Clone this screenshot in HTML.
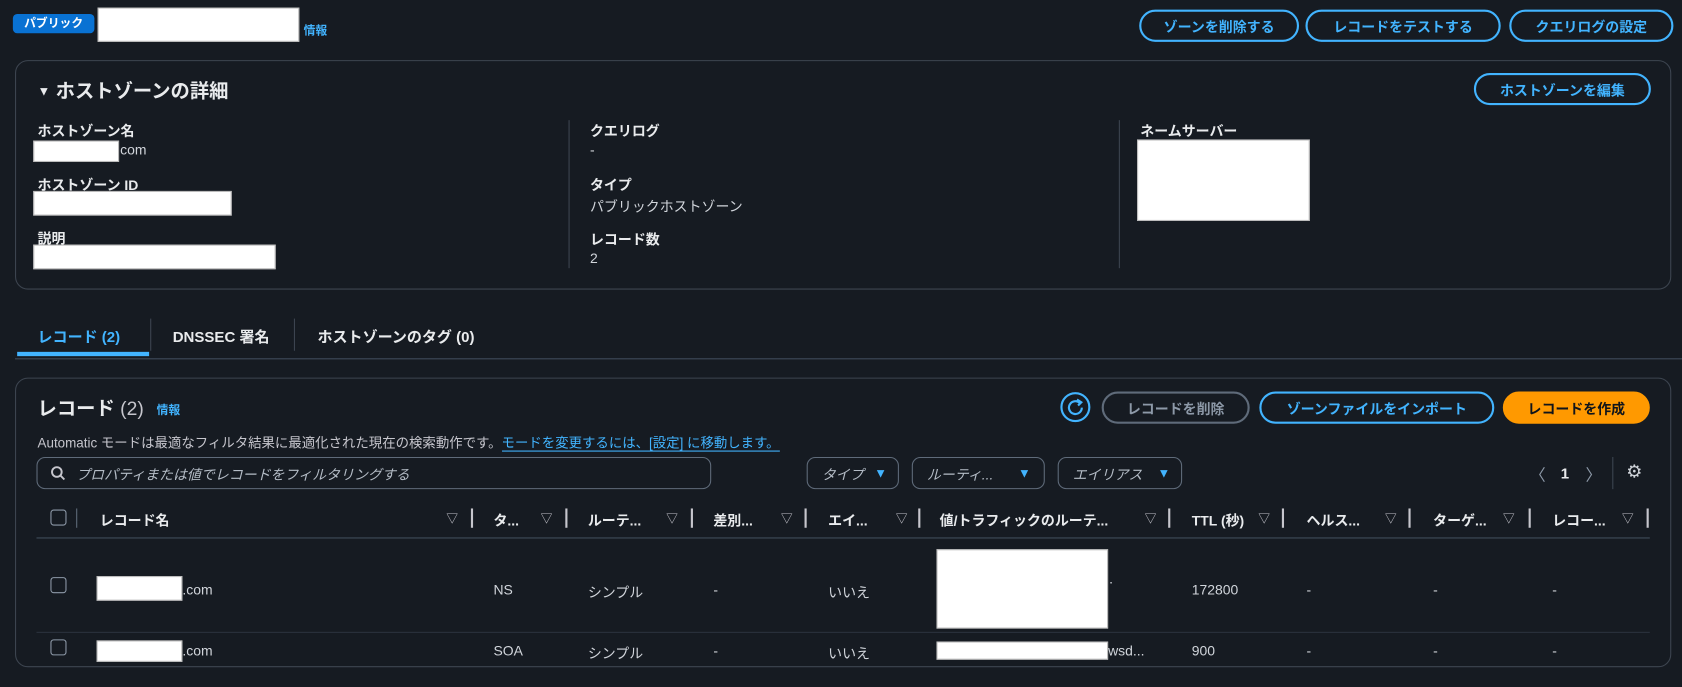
<!DOCTYPE html>
<html><head><meta charset="utf-8"><style>
html,body{margin:0;padding:0;width:1682px;height:687px;overflow:hidden;background:#161b22;}
#s{position:absolute;left:0;top:0;width:1568px;height:640px;transform:scale(1.0727);transform-origin:0 0;font-family:"Liberation Sans","Noto Sans CJK JP",sans-serif;color:#e9ebed;font-size:13px;}
.a{position:absolute;white-space:nowrap;}
.w{position:absolute;background:#fff;border:1px solid #bbb;box-sizing:border-box;}
.btn{position:absolute;box-sizing:border-box;border:2px solid #42b4ff;border-radius:16px;color:#42b4ff;font-weight:bold;font-size:13px;display:flex;align-items:center;justify-content:center;}
.card{position:absolute;border:1px solid #3d4550;border-radius:12px;box-sizing:border-box;}
.lb{font-weight:bold;font-size:13px;color:#e9ebed;}
.v{font-size:13px;color:#d1d5db;}
.vl{position:absolute;width:1px;background:#3d4550;}
.dd{position:absolute;box-sizing:border-box;border:1px solid #5f6b7a;border-radius:8px;height:30px;top:426px;color:#b4bcc6;font-style:italic;font-size:13px;display:flex;align-items:center;padding-left:13px;}
.tri{color:#42b4ff;font-style:normal;font-size:12px;position:absolute;}
.h{position:absolute;top:475px;font-weight:bold;font-size:13px;color:#e9ebed;white-space:nowrap;}
.hs{position:absolute;top:474px;width:2px;height:18px;background:#c6c6cd;}
.ht{position:absolute;top:475px;font-size:11px;color:#c6c6cd;}
.cb{position:absolute;width:13px;height:13px;border:1px solid #8d99a8;border-radius:3px;}
.c{position:absolute;font-size:13px;color:#d1d5db;white-space:nowrap;}
</style></head><body><div id="s">
<div class="a" style="left:12px;top:13px;width:76px;height:18px;background:#0972d3;border-radius:4px;color:#fff;font-size:11px;font-weight:bold;text-align:center;line-height:18px;">パブリック</div>
<div class="w" style="left:91px;top:7px;width:188px;height:32px;"></div>
<div class="a" style="left:283px;top:20px;color:#42b4ff;font-size:11px;font-weight:bold;">情報</div>
<div class="btn" style="left:1062px;top:9px;width:149px;height:30px;">ゾーンを削除する</div>
<div class="btn" style="left:1217px;top:9px;width:182px;height:30px;">レコードをテストする</div>
<div class="btn" style="left:1407px;top:9px;width:153px;height:30px;">クエリログの設定</div>

<div class="card" style="left:14px;top:56px;width:1544px;height:214px;"></div>
<div class="a" style="left:35px;top:71px;font-size:18px;font-weight:bold;"><span style="font-size:12px;position:relative;top:-2px;">▼</span> ホストゾーンの詳細</div>
<div class="btn" style="left:1374px;top:68px;width:165px;height:30px;">ホストゾーンを編集</div>
<div class="a lb" style="left:35px;top:112px;">ホストゾーン名</div>
<div class="w" style="left:31px;top:131px;width:80px;height:20px;"></div>
<div class="a v" style="left:112px;top:132px;">com</div>
<div class="a lb" style="left:35px;top:162px;">ホストゾーン ID</div>
<div class="w" style="left:31px;top:178px;width:185px;height:23px;"></div>
<div class="a lb" style="left:35px;top:212px;">説明</div>
<div class="w" style="left:31px;top:228px;width:226px;height:23px;"></div>
<div class="vl" style="left:530px;top:112px;height:138px;"></div>
<div class="a lb" style="left:550px;top:112px;">クエリログ</div>
<div class="a v" style="left:550px;top:132px;">-</div>
<div class="a lb" style="left:550px;top:162px;">タイプ</div>
<div class="a v" style="left:550px;top:182px;">パブリックホストゾーン</div>
<div class="a lb" style="left:550px;top:213px;">レコード数</div>
<div class="a v" style="left:550px;top:233px;">2</div>
<div class="vl" style="left:1043px;top:112px;height:138px;"></div>
<div class="a lb" style="left:1063px;top:112px;">ネームサーバー</div>
<div class="w" style="left:1060px;top:130px;width:161px;height:76px;"></div>

<div class="a" style="left:35px;top:304px;font-weight:bold;font-size:14px;color:#42b4ff;">レコード (2)</div>
<div class="a" style="left:16px;top:328px;width:123px;height:4px;background:#42b4ff;"></div>
<div class="vl" style="left:140px;top:297px;height:30px;"></div>
<div class="a" style="left:161px;top:304px;font-weight:bold;font-size:14px;">DNSSEC 署名</div>
<div class="vl" style="left:274px;top:297px;height:30px;"></div>
<div class="a" style="left:296px;top:304px;font-weight:bold;font-size:14px;">ホストゾーンのタグ (0)</div>
<div class="a" style="left:14px;top:334px;width:1554px;height:1px;background:#414d5c;"></div>

<div class="card" style="left:14px;top:352px;width:1544px;height:270px;"></div>
<div class="a" style="left:35px;top:367px;font-size:18px;font-weight:bold;">レコード <span style="font-weight:normal;color:#c6c6cd;">(2)</span></div>
<div class="a" style="left:146px;top:374px;color:#42b4ff;font-size:11px;font-weight:bold;">情報</div>
<svg class="a" style="left:988px;top:365px;" width="29" height="29" viewBox="0 0 29 29"><circle cx="14.5" cy="14.5" r="13" fill="none" stroke="#42b4ff" stroke-width="2"/><path d="M18.5 10.5 A6 6 0 1 0 20.5 15" fill="none" stroke="#42b4ff" stroke-width="2"/><path d="M16 7.5 L20 10 L17 13" fill="none" stroke="#42b4ff" stroke-width="2"/></svg>
<div class="btn" style="left:1027px;top:365px;width:138px;height:30px;border-color:#5f6b7a;color:#8d99a8;">レコードを削除</div>
<div class="btn" style="left:1174px;top:365px;width:219px;height:30px;">ゾーンファイルをインポート</div>
<div class="btn" style="left:1401px;top:365px;width:137px;height:30px;background:#ff9900;border-color:#ff9900;color:#0f141a;">レコードを作成</div>
<div class="a" style="left:35px;top:402px;font-size:12.5px;color:#c6c6cd;">Automatic モードは最適なフィルタ結果に最適化された現在の検索動作です。<span style="color:#42b4ff;border-bottom:1px solid #42b4ff;">モードを変更するには、[設定] に移動します。</span></div>
<div class="dd" style="left:34px;width:629px;padding-left:36px;"><svg style="position:absolute;left:12px;top:7px" width="14" height="14" viewBox="0 0 14 14"><circle cx="6" cy="6" r="4.5" fill="none" stroke="#c6c6cd" stroke-width="1.8"/><path d="M9.5 9.5 L13 13" stroke="#c6c6cd" stroke-width="1.8"/></svg>プロパティまたは値でレコードをフィルタリングする</div>
<div class="dd" style="left:752px;width:86px;">タイプ<span class="tri" style="left:62px;">▼</span></div>
<div class="dd" style="left:850px;width:124px;">ルーティ...<span class="tri" style="left:98px;">▼</span></div>
<div class="dd" style="left:986px;width:116px;">エイリアス<span class="tri" style="left:92px;">▼</span></div>
<div class="a" style="left:1426px;top:432px;color:#8d99a8;font-size:15px;">〈</div>
<div class="a" style="left:1455px;top:433px;font-weight:bold;font-size:14px;">1</div>
<div class="a" style="left:1478px;top:432px;color:#8d99a8;font-size:15px;">〉</div>
<div class="vl" style="left:1503px;top:426px;height:30px;"></div>
<div class="a" style="left:1516px;top:430px;font-size:17px;color:#d1d5db;">⚙</div>

<div class="cb" style="left:47px;top:475px;"></div>
<div class="hs" style="left:71px;width:1px;background:#5f6b7a;"></div>
<div class="h" style="left:93px;">レコード名</div><div class="ht" style="left:416px;">▽</div><div class="hs" style="left:439px;"></div>
<div class="h" style="left:460px;">タ...</div><div class="ht" style="left:504px;">▽</div><div class="hs" style="left:527px;"></div>
<div class="h" style="left:548px;">ルーテ...</div><div class="ht" style="left:621px;">▽</div><div class="hs" style="left:644px;"></div>
<div class="h" style="left:665px;">差別...</div><div class="ht" style="left:728px;">▽</div><div class="hs" style="left:750px;"></div>
<div class="h" style="left:772px;">エイ...</div><div class="ht" style="left:835px;">▽</div><div class="hs" style="left:856px;"></div>
<div class="h" style="left:876px;">値/トラフィックのルーテ...</div><div class="ht" style="left:1067px;">▽</div><div class="hs" style="left:1089px;"></div>
<div class="h" style="left:1111px;">TTL (秒)</div><div class="ht" style="left:1173px;">▽</div><div class="hs" style="left:1195px;"></div>
<div class="h" style="left:1218px;">ヘルス...</div><div class="ht" style="left:1291px;">▽</div><div class="hs" style="left:1313px;"></div>
<div class="h" style="left:1336px;">ターゲ...</div><div class="ht" style="left:1401px;">▽</div><div class="hs" style="left:1425px;"></div>
<div class="h" style="left:1447px;">レコー...</div><div class="ht" style="left:1512px;">▽</div><div class="hs" style="left:1535px;"></div>
<div class="a" style="left:34px;top:501px;width:1504px;height:1px;background:#414d5c;"></div>

<div class="cb" style="left:47px;top:538px;"></div>
<div class="w" style="left:90px;top:537px;width:80px;height:23px;"></div>
<div class="c" style="left:170px;top:542px;">.com</div>
<div class="c" style="left:460px;top:542px;">NS</div>
<div class="c" style="left:548px;top:542px;">シンプル</div>
<div class="c" style="left:665px;top:542px;">-</div>
<div class="c" style="left:772px;top:542px;">いいえ</div>
<div class="w" style="left:873px;top:512px;width:160px;height:74px;"></div>
<div class="c" style="left:1034px;top:532px;">.</div>
<div class="c" style="left:1111px;top:542px;">172800</div>
<div class="c" style="left:1218px;top:542px;">-</div>
<div class="c" style="left:1336px;top:542px;">-</div>
<div class="c" style="left:1447px;top:542px;">-</div>
<div class="a" style="left:34px;top:589px;width:1504px;height:1px;background:#2a323d;"></div>

<div class="cb" style="left:47px;top:596px;"></div>
<div class="w" style="left:90px;top:597px;width:80px;height:20px;"></div>
<div class="c" style="left:170px;top:599px;">.com</div>
<div class="c" style="left:460px;top:599px;">SOA</div>
<div class="c" style="left:548px;top:599px;">シンプル</div>
<div class="c" style="left:665px;top:599px;">-</div>
<div class="c" style="left:772px;top:599px;">いいえ</div>
<div class="w" style="left:873px;top:598px;width:160px;height:17px;"></div>
<div class="c" style="left:1033px;top:599px;">wsd...</div>
<div class="c" style="left:1111px;top:599px;">900</div>
<div class="c" style="left:1218px;top:599px;">-</div>
<div class="c" style="left:1336px;top:599px;">-</div>
<div class="c" style="left:1447px;top:599px;">-</div>
</div></body></html>
